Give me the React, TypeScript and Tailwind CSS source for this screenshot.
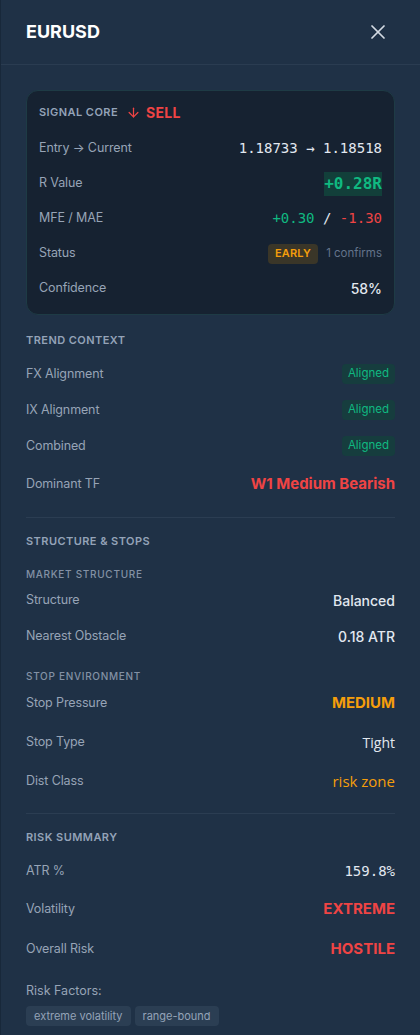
import type { JSX, ReactNode } from 'react'
import { ArrowDown, X } from 'lucide-react'

const sans = { fontFamily: 'Inter, "Noto Sans", sans-serif' }

function Row(props: { label: string; children: ReactNode; h?: string }): JSX.Element {
  const { label, children, h = 'h-[36px]' } = props
  return (
    <div className={`flex ${h} items-center justify-between`}>
      <span className="text-[12.5px] tracking-[-0.01em] text-[#97a4b6]">{label}</span>
      <div className="flex items-center">{children}</div>
    </div>
  )
}

function Aligned(): JSX.Element {
  return (
    <span className="flex h-[20px] items-center rounded bg-[#163d3e] px-[6px] text-[11.5px] text-[#10b981]">
      Aligned
    </span>
  )
}

function Heading({ children }: { children: ReactNode }): JSX.Element {
  return (
    <div className="flex h-[20px] items-center text-[11px] font-semibold tracking-[0.04em] text-[#94a3b8]">
      {children}
    </div>
  )
}

function SubHeading({ children }: { children: ReactNode }): JSX.Element {
  return (
    <div className="flex h-[16px] items-center text-[10px] font-medium tracking-[0.07em] text-[#8391a5]">
      {children}
    </div>
  )
}

function SignalCore(): JSX.Element {
  const mono = { fontFamily: '"DejaVu Sans Mono", "Liberation Mono", monospace' }
  return (
    <div className="rounded-xl border border-[#1e3b45] bg-[#162231] px-[12px] pb-[8px] pt-[10px]">
      <div className="mb-[8px] flex h-[22px] items-center gap-[8px]">
        <span className="text-[11px] font-semibold tracking-[0.04em] text-[#94a3b8]">
          SIGNAL CORE
        </span>
        <span className="flex items-center gap-[5px] text-[#ef4444]">
          <ArrowDown size={15} strokeWidth={2} />
          <span className="text-[14px] font-bold tracking-[0.02em]">SELL</span>
        </span>
      </div>
      <Row label="Entry → Current" h="h-[35px]">
        <span style={mono} className="text-[14px] text-[#e2e8f0]">
          1.18733 → 1.18518
        </span>
      </Row>
      <Row label="R Value" h="h-[35px]">
        <span
          style={mono}
          className="bg-[#123f3a] text-[16px] font-bold leading-[24px] text-[#10b981]"
        >
          +0.28R
        </span>
      </Row>
      <Row label="MFE / MAE" h="h-[35px]">
        <span style={mono} className="text-[14px]">
          <span className="text-[#10b981]">+0.30</span>
          <span className="text-[#e2e8f0]"> / </span>
          <span className="text-[#ef4444]">-1.30</span>
        </span>
      </Row>
      <Row label="Status" h="h-[35px]">
        <span className="flex h-[20px] items-center rounded bg-[#3a3628] px-[7px] text-[11px] font-semibold tracking-[0.02em] text-[#f59e0b]">
          EARLY
        </span>
        <span className="ml-[8px] text-[11.5px] text-[#64748b]">1 confirms</span>
      </Row>
      <Row label="Confidence" h="h-[35px]">
        <span className="text-[14px] font-medium text-[#e2e8f0]">58%</span>
      </Row>
    </div>
  )
}

export default function App(): JSX.Element {
  const alt = { fontFamily: '"Open Sans", "Noto Sans", sans-serif' }
  return (
    <div style={sans} className="min-h-screen w-[420px] border-l border-[#18283a] bg-[#1f3146]">
      <div className="flex h-[65px] items-center justify-between border-b border-[#2a3c51] px-[25px] pb-[1px]">
        <h1 className="text-[18px] font-bold text-white">EURUSD</h1>
        <X size={24} strokeWidth={1.75} className="mr-[5px] text-[#d3dae3]" />
      </div>

      <div className="px-[25px] pt-[25px]">
        <SignalCore />

        <div className="mt-[15px]">
          <Heading>TREND CONTEXT</Heading>
          <div className="mt-[6px]">
            <Row label="FX Alignment">
              <Aligned />
            </Row>
            <Row label="IX Alignment">
              <Aligned />
            </Row>
            <Row label="Combined">
              <Aligned />
            </Row>
            <Row label="Dominant TF" h="h-[40px]">
              <span className="text-[15px] font-bold text-[#ef4444]">W1 Medium Bearish</span>
            </Row>
          </div>
        </div>

        <div className="mt-[13px] border-t border-[#2b3d52] pt-[13px]">
          <Heading>STRUCTURE &amp; STOPS</Heading>
          <div className="mt-[15px]">
            <SubHeading>MARKET STRUCTURE</SubHeading>
            <Row label="Structure">
              <span className="text-[14px] font-medium text-[#e2e8f0]">Balanced</span>
            </Row>
            <Row label="Nearest Obstacle">
              <span className="text-[14px] font-medium text-[#e2e8f0]">0.18 ATR</span>
            </Row>
          </div>
          <div className="mt-[14px]">
            <SubHeading>STOP ENVIRONMENT</SubHeading>
            <Row label="Stop Pressure" h="h-[38px]">
              <span className="text-[15px] font-bold text-[#f59e0b]">MEDIUM</span>
            </Row>
            <Row label="Stop Type" h="h-[40px]">
              <span style={alt} className="text-[14px] font-medium text-[#e2e8f0]">
                Tight
              </span>
            </Row>
            <Row label="Dist Class" h="h-[38px]">
              <span style={alt} className="text-[15px] text-[#f59e0b]">
                risk zone
              </span>
            </Row>
          </div>
        </div>

        <div className="mt-[13px] border-t border-[#2b3d52] pt-[13px]">
          <Heading>RISK SUMMARY</Heading>
          <div className="mt-[6px]">
            <Row label="ATR %">
              <span
                style={{ fontFamily: '"DejaVu Sans Mono", monospace' }}
                className="text-[14px] font-medium text-[#e2e8f0]"
              >
                159.8%
              </span>
            </Row>
            <Row label="Volatility" h="h-[40px]">
              <span className="text-[15px] font-bold text-[#ef4444]">EXTREME</span>
            </Row>
            <Row label="Overall Risk" h="h-[40px]">
              <span className="text-[15px] font-bold text-[#ef4444]">HOSTILE</span>
            </Row>
          </div>
          <div className="mt-[12px] flex h-[20px] items-center text-[12.5px] text-[#97a4b6]">
            Risk Factors:
          </div>
          <div className="mt-[5px] flex gap-[4px] pb-[9px]">
            <span className="flex h-[20px] items-center rounded bg-[#2b3e53] px-[8px] text-[11px] text-[#94a3b8]">
              extreme volatility
            </span>
            <span className="flex h-[20px] items-center rounded bg-[#2b3e53] px-[8px] text-[11px] text-[#94a3b8]">
              range-bound
            </span>
          </div>
        </div>
      </div>
    </div>
  )
}
